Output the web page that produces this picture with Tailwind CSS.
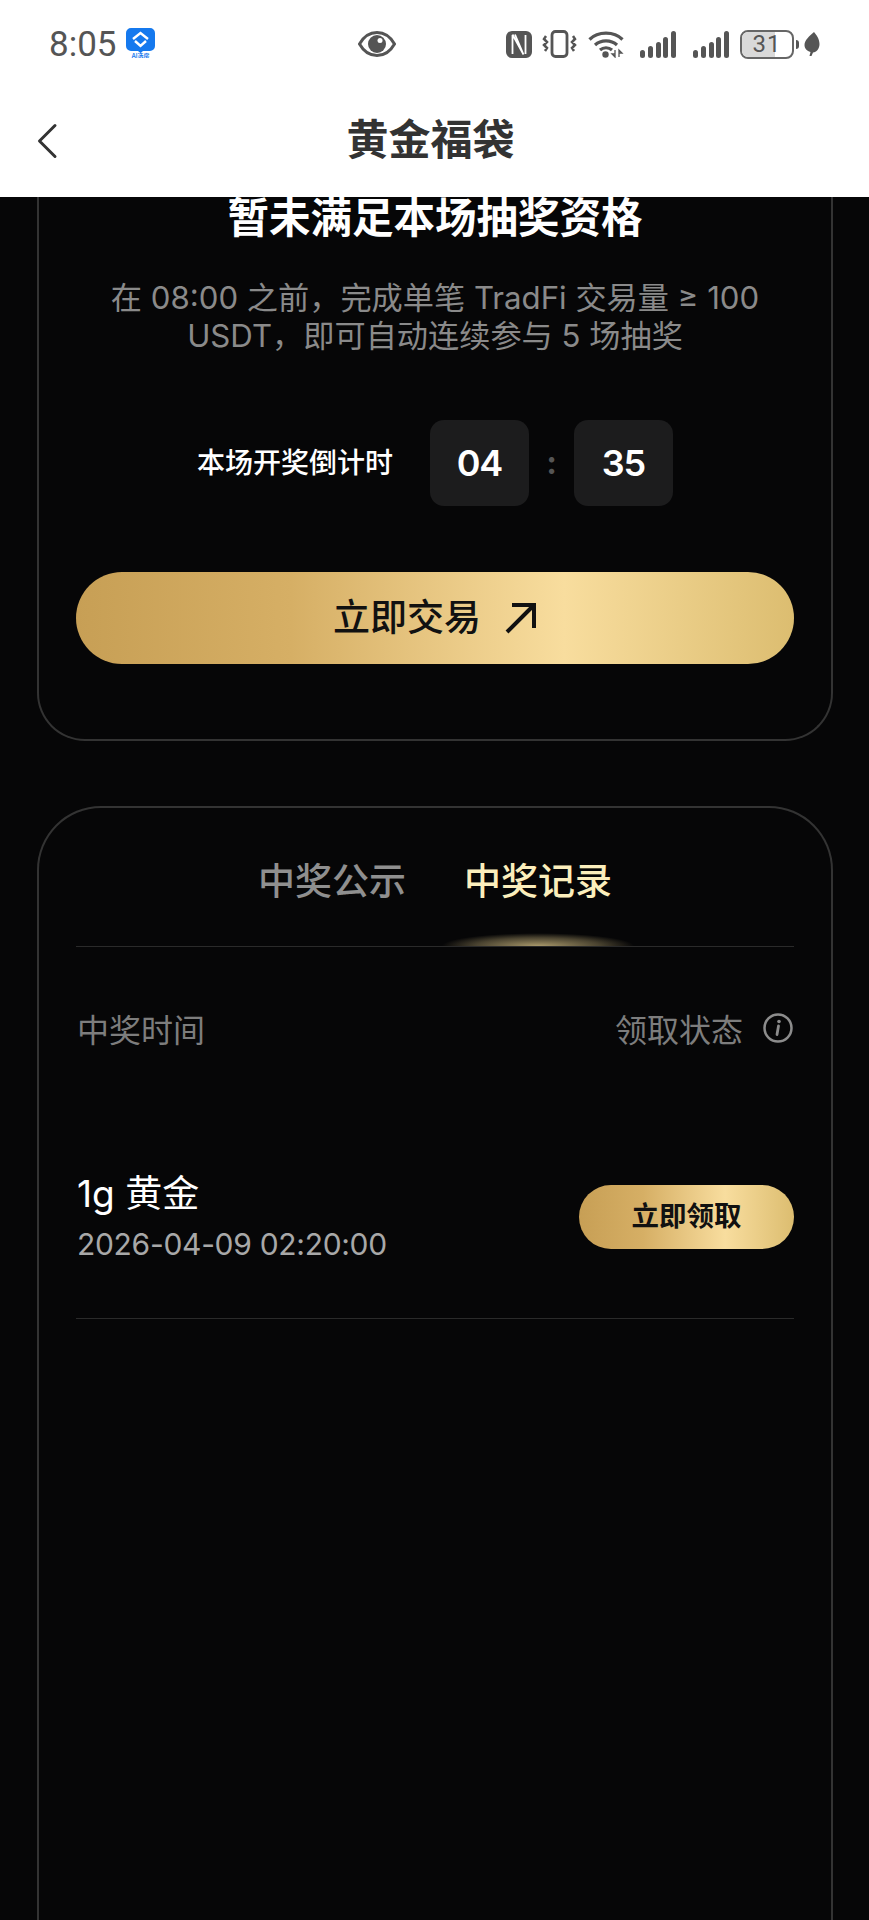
<!DOCTYPE html>
<html lang="en">

<head>
    <meta charset="UTF-8">
    <meta name="viewport" content="width=device-width, initial-scale=1.0" />
    <title>黄金福袋</title>
    <script src="https://cdn.jsdelivr.net/npm/@tailwindcss/browser@4"></script>
</head>

<body class="bg-[#060607] font-['Inter','Noto_Sans_CJK_SC',sans-serif]">
    <div class="h-[1920px] overflow-hidden">
        <!-- status bar + nav -->
        <header class="h-[197px] bg-white">
            <div class="flex h-[88px] items-center pl-[49px] pr-[49px]">
                <span class="font-['Roboto',sans-serif] text-[35px] leading-none text-[#555]">8:05</span>
                <svg class="ml-[8px] -mt-[3px]" width="31" height="30" viewBox="0 0 31 30">
                    <path d="M6 0h19a5 5 0 0 1 5 5v13a5 5 0 0 1-5 5H18l-2.500 2-2.500-2H6a5 5 0 0 1-5-5V5a5 5 0 0 1 5-5z" fill="#1579ee"/>
                    <path d="M8 11l7.500-6 7.500 6M10 13l5.500 5 5.500-5" fill="none" stroke="#fff" stroke-width="2.400"/>
                    <text x="15.500" y="30" text-anchor="middle" font-size="6" font-weight="600" fill="#1579ee">AI选房</text>
                </svg>
                <svg class="ml-[202px]" width="38" height="26" viewBox="0 0 38 26">
                    <path d="M1.500 13C6 5 12 1.500 19 1.500S32 5 36.500 13C32 21 26 24.500 19 24.500S6 21 1.500 13z" fill="none" stroke="#555" stroke-width="3"/>
                    <circle cx="19" cy="13" r="9" fill="#555"/>
                    <circle cx="22" cy="9.500" r="2.500" fill="#fff"/>
                </svg>
                <div class="ml-auto flex items-center">
                    <svg width="26" height="27" viewBox="0 0 26 27">
                        <rect x="0" y="0" width="26" height="27" rx="6" fill="#555"/>
                        <path d="M6.500 4v19M19.500 4v19M9 3.500l8.500 20M6.500 3.500l11 20" fill="none" stroke="#fff" stroke-width="1.800"/>
                    </svg>
                    <svg class="ml-[10px]" width="35" height="28" viewBox="0 0 35 28">
                        <rect x="10" y="1.500" width="15" height="25" rx="3.500" fill="none" stroke="#555" stroke-width="2.800"/>
                        <path d="M4 6l-2 3 3 3-3 3 3 3-2 3M31 6l2 3-3 3 3 3-3 3 2 3" fill="none" stroke="#555" stroke-width="2.500"/>
                    </svg>
                    <svg class="ml-[11px]" width="36" height="28" viewBox="0 0 36 28">
                        <path d="M1.500 9.500C10 1 26 1 34.500 9.500M7 15c6-5.500 16-5.500 22 0M12 20c3.500-3 8.500-3 12 0" fill="none" stroke="#555" stroke-width="3.200"/>
                        <circle cx="17.500" cy="24.500" r="3.200" fill="#555"/>
                        <path d="M27 20v7l-3-3h3M31 27v-7l3 3h-3" fill="none" stroke="#555" stroke-width="1.300"/>
                    </svg>
                    <svg class="ml-[16px]" width="36" height="27" viewBox="0 0 36 27">
                        <rect x="0" y="19" width="5" height="8" rx="2.500" fill="#555"/>
                        <rect x="8" y="15" width="5" height="12" rx="2.500" fill="#555"/>
                        <rect x="16" y="11" width="5" height="16" rx="2.500" fill="#555"/>
                        <rect x="23" y="6" width="5" height="21" rx="2.500" fill="#555"/>
                        <rect x="31" y="0" width="5" height="27" rx="2.500" fill="#555"/>
                    </svg>
                    <svg class="ml-[17px]" width="36" height="27" viewBox="0 0 36 27">
                        <rect x="0" y="19" width="5" height="8" rx="2.500" fill="#555"/>
                        <rect x="8" y="15" width="5" height="12" rx="2.500" fill="#555"/>
                        <rect x="16" y="11" width="5" height="16" rx="2.500" fill="#555"/>
                        <rect x="23" y="6" width="5" height="21" rx="2.500" fill="#555"/>
                        <rect x="31" y="0" width="5" height="27" rx="2.500" fill="#555"/>
                    </svg>
                    <div class="relative ml-[11px] flex h-[29px] w-[54px] items-center justify-center overflow-hidden rounded-[8px] border-2 border-[#666]">
                        <div class="absolute inset-y-0 left-0 w-[65%] bg-[#d9d9d9]"></div>
                        <span class="relative font-['Roboto',sans-serif] text-[24px] leading-none tracking-[1px] text-[#555]">31</span>
                    </div>
                    <div class="ml-[2px] h-[9px] w-[3px] rounded-r-sm bg-[#555]"></div>
                    <svg class="ml-[5px]" width="16" height="24" viewBox="0 0 15 24">
                        <path d="M9.500 0C12 3 15 7 15 12c0 5-3 8-6.500 8.500L7 24H5l1-4C2.500 19 0 16.500 0 13 0 8 5 4 9.500 0z" fill="#555"/>
                    </svg>
                </div>
            </div>
            <div class="relative flex h-[109px] items-center justify-center pr-[8px] pb-[5px]">
                <svg class="absolute left-[36px] top-[35px]" width="22" height="36" viewBox="0 0 22 36">
                    <path d="M19 2.500L3.500 18 19 33.500" fill="none" stroke="#333" stroke-width="3" stroke-linecap="round" stroke-linejoin="round"/>
                </svg>
                <h1 class="text-[42px] font-bold leading-none text-[#333]">黄金福袋</h1>
            </div>
        </header>

        <main class="pl-[37px] pr-[36px]">
            <!-- eligibility card -->
            <section class="rounded-b-[48px] border-2 border-t-0 border-[#333] px-[37px] pb-[75px]">
                <h2 class="text-center text-[41.500px] font-bold leading-[42px] text-white">暂未满足本场抽奖资格</h2>
                <p class="mt-[40px] text-center text-[31.200px] leading-[38px] text-[#8a8a8a]">在 08:00 之前，完成单笔 TradFi 交易量 ≥ 100<br>USDT，即可自动连续参与 5 场抽奖</p>
                <div class="mt-[65px] flex items-center justify-center">
                    <span class="mr-[37px] text-[28px] leading-none font-medium text-white">本场开奖倒计时</span>
                    <div class="flex h-[86px] w-[99px] items-center justify-center rounded-[14px] bg-[#1c1c1d] text-[36px] font-semibold tracking-[-1px] text-white">04</div>
                    <span class="w-[45px] text-center text-[32px] font-bold text-[#555]">:</span>
                    <div class="flex h-[86px] w-[99px] items-center justify-center rounded-[14px] bg-[#1c1c1d] text-[36px] font-semibold tracking-[-1px] text-white">35</div>
                </div>
                <button class="mt-[66px] flex h-[92px] w-full items-center justify-center rounded-full bg-[linear-gradient(90deg,#c79f55_0%,#d6af65_30%,#f8dd9e_68%,#dcbd70_100%)] text-[37px] font-medium text-[#111]">
                    立即交易
                    <svg class="ml-[22px]" width="34" height="34" viewBox="0 0 34 34">
                        <path d="M4 31L30 5M9 4h22v23" fill="none" stroke="#111" stroke-width="4"/>
                    </svg>
                </button>
            </section>

            <!-- records card -->
            <section class="mt-[65px] h-[1200px] rounded-t-[64px] border-2 border-b-0 border-[#333] px-[37px]">
                <div class="relative flex justify-center gap-[58px] border-b border-[#2a2a2a] pt-[50px] pb-[40px]">
                    <span class="text-[37px] font-medium leading-[48px] text-[#8f8f8f]">中奖公示</span>
                    <span class="relative text-[37px] font-medium leading-[48px] text-[#fbeebc]">
                        中奖记录
                        <span class="absolute -bottom-[40px] left-[-23px] h-[13px] w-[194px] bg-[radial-gradient(ellipse_at_50%_100%,#a8986a_0%,#4a4330_45%,transparent_70%)]"></span>
                    </span>
                </div>
                <div class="mt-[62px] flex items-center justify-between pl-[1px] text-[32px] leading-[44px] text-[#7d7d7d]">
                    <span>中奖时间</span>
                    <span class="flex items-center">
                        领取状态
                        <svg class="ml-[19px] -mt-[6px]" width="32" height="32" viewBox="0 0 32 32">
                            <circle cx="16" cy="16" r="13.500" fill="none" stroke="#8c8c8c" stroke-width="2.500"/>
                            <circle cx="17" cy="9.500" r="1.800" fill="#8c8c8c"/>
                            <path d="M16.500 14l-1.500 8.500" fill="none" stroke="#8c8c8c" stroke-width="2.800" stroke-linecap="round"/>
                        </svg>
                    </span>
                </div>
                <div class="flex h-[266px] items-center justify-between border-b border-[#2a2a2a] pt-[62px] pl-[1px]">
                    <div class="mt-[4px]">
                        <div class="text-[37px] leading-[50px] text-white">1g 黄金</div>
                        <div class="text-[30px] leading-[50px] tracking-[-0.3px] text-[#a8a8a8]">2026-04-09 02:20:00</div>
                    </div>
                    <button class="h-[64px] w-[215px] rounded-full bg-[linear-gradient(90deg,#c79f55_0%,#d6af65_30%,#f8dd9e_68%,#dcbd70_100%)] text-[27.500px] font-bold text-[#111]">立即领取</button>
                </div>
            </section>
        </main>
    </div>
</body>

</html>
